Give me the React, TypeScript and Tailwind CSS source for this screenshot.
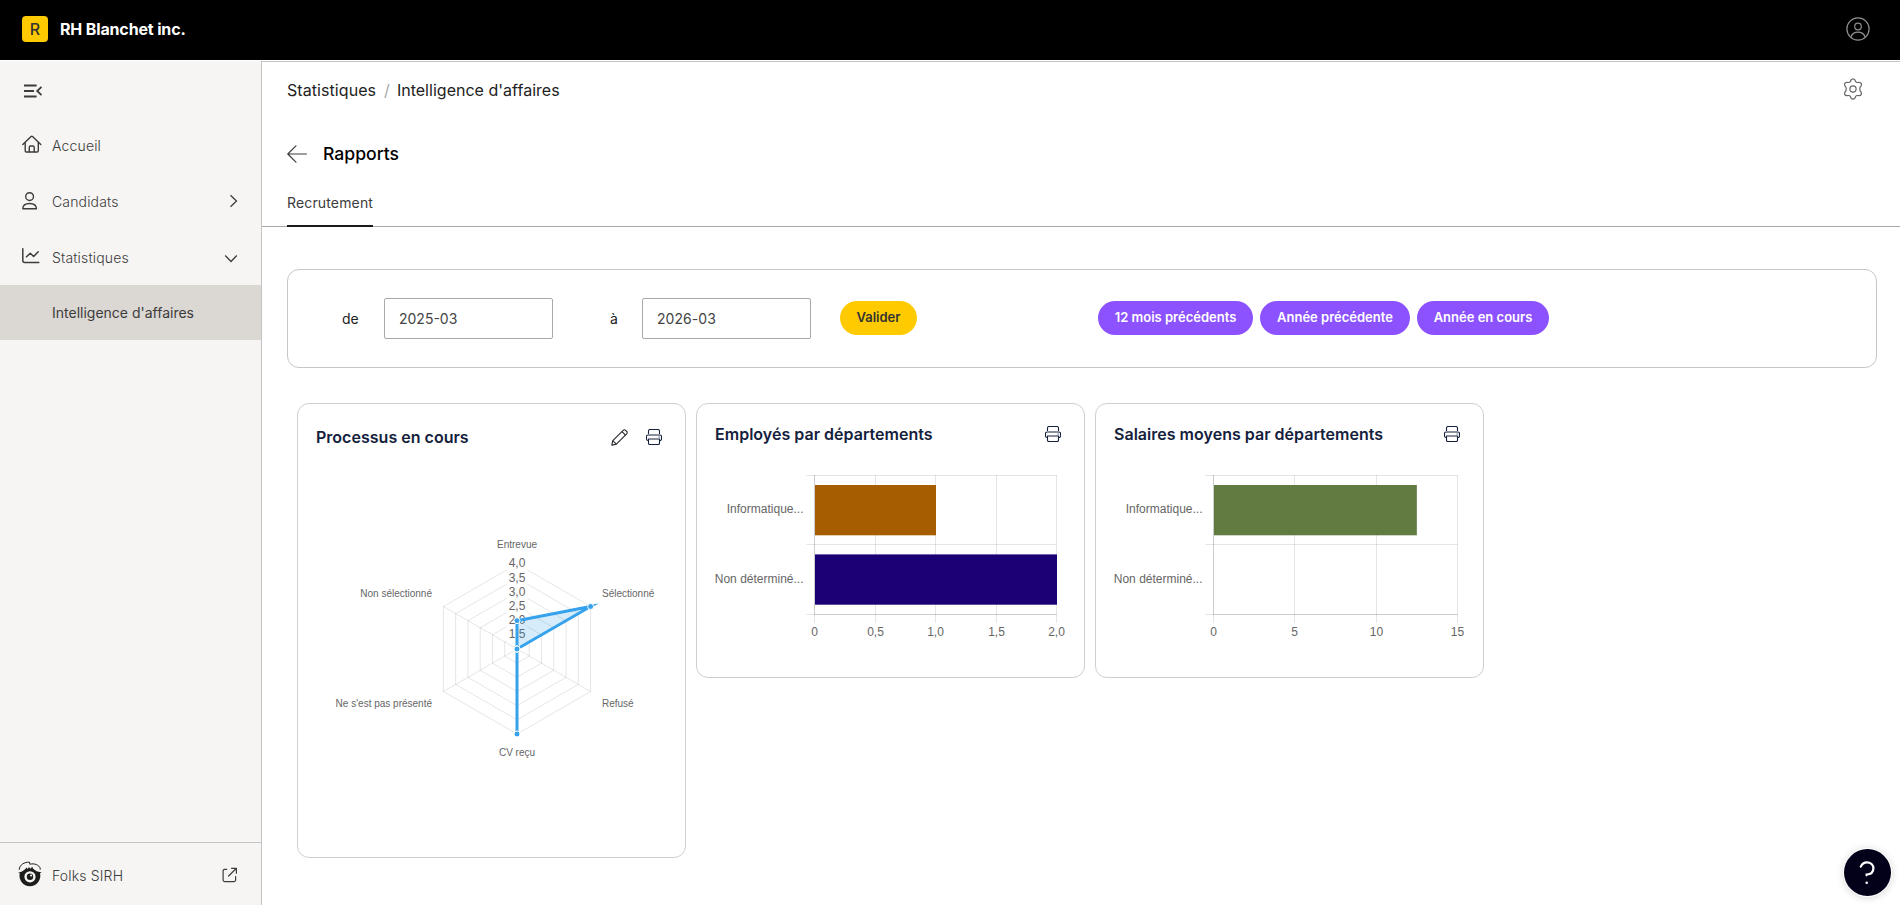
import React from 'react';

interface IconProps {
  className?: string;
}

interface BarItem {
  label: string;
  value: number;
  color: string;
}

interface BarChartProps {
  items: BarItem[];
  ticks: string[];
  tickX: number[];
  max: number;
}

const CollapseIcon = ({ className }: IconProps) => (
  <svg className={className} width="20" height="14" viewBox="0 0 20 14" fill="none" stroke="#3c3c3c" strokeWidth="1.8">
    <path d="M1 1.5h12.6M1 7h10M1 12.5h12.6" />
    <path d="M18.5 2.8L14.2 7l4.3 4.2" />
  </svg>
);

const HomeIcon = ({ className }: IconProps) => (
  <svg className={className} width="20" height="18" viewBox="0 0 20 18" fill="none" stroke="#3c3c3c" strokeWidth="1.4" strokeLinecap="round" strokeLinejoin="round">
    <path d="M.8 9.6l8.3-8a1 1 0 0 1 1.4 0l8.3 8" />
    <path d="M3.2 7.8v8a1.2 1.2 0 0 0 1.2 1.2h10.7a1.2 1.2 0 0 0 1.2-1.2V7.8" />
    <path d="M7.3 16.8v-4.6a1.2 1.2 0 0 1 1.2-1.2h2.5a1.2 1.2 0 0 1 1.2 1.2v4.6" />
  </svg>
);

const PersonIcon = ({ className }: IconProps) => (
  <svg className={className} width="16" height="18" viewBox="0 0 16 18" fill="none" stroke="#3c3c3c" strokeWidth="1.4" strokeLinejoin="round">
    <circle cx="7.6" cy="4.6" r="3.9" />
    <path d="M.8 16.8c0-3.5 2.8-5.3 6.8-5.3s6.8 1.8 6.8 5.3z" />
  </svg>
);

const ChartIcon = ({ className }: IconProps) => (
  <svg className={className} width="18" height="16" viewBox="0 0 18 16" fill="none" stroke="#3c3c3c" strokeWidth="1.5" strokeLinecap="round" strokeLinejoin="round">
    <path d="M.8.8v12a1.7 1.7 0 0 0 1.7 1.7h14.3" />
    <path d="M4.5 8.7l3.8-3.5 3.3 3.3 4.6-4.7" />
  </svg>
);

const ArrowLeftIcon = () => (
  <svg width="20" height="18" viewBox="0 0 20 18" fill="none" stroke="#3c3c3c" strokeWidth="1.2" strokeLinecap="round" strokeLinejoin="round">
    <path d="M19.4 9H.8M8.9.8L.8 9l8.1 8.2" />
  </svg>
);

const ExternalIcon = () => (
  <svg width="16" height="16" viewBox="0 0 16 16" fill="none" stroke="#3c3c3c" strokeWidth="1.2" strokeLinecap="round" strokeLinejoin="round">
    <path d="M9.5 1.3h4.9v4.9M14.2 1.5L6.6 9" />
    <path d="M4.7 2.3H2.6A1.5 1.5 0 0 0 1.1 3.8v9.3a1.5 1.5 0 0 0 1.5 1.5h9.5a1.5 1.5 0 0 0 1.5-1.5V9.5" />
  </svg>
);

const FolksLogo = () => (
  <svg width="24" height="27" viewBox="0 0 24 27" fill="none">
    <path d="M.2 11.7L4 10.5l3.4-2.6 1.1-1.5 1.1 1.5L11 5.9l1.3 1.9 2-2.1.8 2 3.5 2.6 5.2 1.3-1.8.7a10.4 10.4 0 1 1-20.2 0z" fill="#1d1d1b" />
    <circle cx="12" cy="15.8" r="5.6" fill="#f6f5f3" />
    <circle cx="12" cy="15.8" r="3.2" fill="#1d1d1b" />
    <circle cx="13.1" cy="14.5" r="1.1" fill="#f6f5f3" />
    <path d="M1.2 8.8C1.3 4 6.5.8 11.5 1.2l.3 1.8M11.7 3.3c4.8-1.5 9.5 1 10.5 3.9v1.5" stroke="#1d1d1b" strokeWidth="1" />
  </svg>
);

const PencilIcon = () => (
  <svg width="17" height="17" viewBox="0 0 17 17" fill="none" stroke="#26282c" strokeWidth="1.1" strokeLinejoin="round">
    <path d="M.8 16.2l1-4.6L12.2 1.3a1.6 1.6 0 0 1 2.3 0l1.2 1.2a1.6 1.6 0 0 1 0 2.3L5.4 15.1z" />
    <path d="M11 2.6l3.5 3.5M1.8 11.6l3.6 3.5" />
  </svg>
);

const PrinterIcon = () => (
  <svg width="16" height="16" viewBox="0 0 16 16" fill="none" stroke="#14213d" strokeWidth="1.1" strokeLinecap="round" strokeLinejoin="round">
    <path d="M2.5 4.5V2A1.5 1.5 0 0 1 4 .5h8A1.5 1.5 0 0 1 13.500 2v2.500" />
    <path d="M2.500 11.500H2A1.500 1.500 0 0 1 .5 10V7.500A1.500 1.500 0 0 1 2 6h12a1.500 1.500 0 0 1 1.500 1.500V10a1.500 1.500 0 0 1-1.500 1.500h-.5" />
    <path d="M2.500 10h11v4.200a1.300 1.300 0 0 1-1.300 1.300H3.800a1.300 1.300 0 0 1-1.300-1.300zM13 8h.3" />
  </svg>
);

const GearIcon = () => (
  <svg width="22" height="22" viewBox="0 0 22 22" fill="none" stroke="#666" strokeWidth="1.2" strokeLinejoin="round">
    <circle cx="11" cy="11" r="3.1" />
    <path d="M8.900 2.200Q11-.5 13.100 2.200l.6 1.500q.6.9 1.700.8l1.600-.2q3.400.4 2.100 3.600l-1 1.300q-.6 1.800 0 3.600l1 1.300q1.300 3.200-2.100 3.600l-1.600-.2q-1.100-.1-1.700.8l-.6 1.500Q11 22.500 8.900 19.800l-.6-1.500q-.6-.9-1.700-.8l-1.600.2q-3.400-.4-2.100-3.600l1-1.300q.6-1.800 0-3.600L2.900 7.900Q1.600 4.700 5 4.300l1.600.2q1.100.1 1.700-.8z" />
  </svg>
);

const UserCircleIcon = () => (
  <svg width="24" height="24" viewBox="0 0 24 24" fill="none" stroke="#8f8f8f" strokeWidth="1.2">
    <circle cx="12" cy="12" r="11.1" />
    <circle cx="12" cy="9.5" r="3.3" />
    <path d="M4.700 20.200c1.200-3.300 3.900-5.100 7.300-5.100s6.100 1.800 7.300 5.100" />
  </svg>
);

const BarChart: React.FC<BarChartProps> = ({ items, ticks, tickX, max }) => {
  const left = tickX[0];
  const right = tickX[tickX.length - 1];
  return (
    <svg className="block" width="387" height="200" fontFamily='"Liberation Sans", Arial, sans-serif' fontSize="12">
      {/* grid */}
      {[21.5, 90.5, 160.5].map(y => (
        <line key={y} x1={left - 8} x2={right} y1={y} y2={y} stroke="#000" strokeOpacity="0.1" />
      ))}
      {tickX.map(x => (
        <line key={x} x1={x} x2={x} y1="21" y2="169" stroke="#000" strokeOpacity="0.1" />
      ))}
      <path d={`M${left} 21V160.5H${right}`} fill="none" stroke="#000" strokeOpacity="0.1" />
      {items.map((item, i) => {
        const width = ((right - left) * item.value) / max;
        const y = 31 + i * 69.4;
        return (
          <g key={item.label}>
            {width > 0 && (
              <rect x={left + 0.5} y={y} width={width} height="50.3" fill={item.color} />
            )}
            <text x={left - 11} y={59 + i * 70} textAnchor="end" fill="#666">{item.label}</text>
          </g>
        );
      })}
      {ticks.map((t, i) => (
        <text key={t} x={tickX[i]} y="182" textAnchor="middle" fill="#666">{t}</text>
      ))}
    </svg>
  );
};

const CX = 219;
const CY = 186;
const RADIUS = 85;
const MIN = 1;
const MAX = 4;

const radarPoint = (index: number, value: number) => {
  const r = ((value - MIN) / (MAX - MIN)) * RADIUS;
  const angle = (Math.PI / 3) * index - Math.PI / 2;
  return [CX + r * Math.cos(angle), CY + r * Math.sin(angle)];
};

const toPoints = (values: number[]) => values.map((v, i) => radarPoint(i, v).join(',')).join(' ');

const RadarChart = () => {
  const levels = [1.5, 2, 2.5, 3, 3.5, 4];
  const values = [2, 4, 1, 4, 1, 1];
  return (
    <svg className="block" width="387" height="380" fontFamily='"Liberation Sans", Arial, sans-serif'>
      {levels.map(l => (
        <polygon key={l} points={toPoints([l, l, l, l, l, l])} fill="none" stroke="#000" strokeOpacity="0.1" />
      ))}
      {values.map((_, i) => {
        const [x, y] = radarPoint(i, MAX);
        return <line key={i} x1={CX} y1={CY} x2={x} y2={y} stroke="#000" strokeOpacity="0.1" />;
      })}
      {levels.map(l => {
        const y = radarPoint(0, l)[1];
        return (
          <g key={l}>
            <rect x={CX - 10.5} y={y - 8} width="21" height="16" fill="#fff" fillOpacity="0.75" />
            <text x={CX} y={Math.round(y + 3.4)} fontSize="12" textAnchor="middle" fill="#666">{l.toFixed(1).replace('.', ',')}</text>
          </g>
        );
      })}
      <g fontSize="10" fill="#666">
        <text x={CX} y="85" textAnchor="middle">Entrevue</text>
        <text x="304" y="134">Sélectionné</text>
        <text x="304" y="244">Refusé</text>
        <text x={CX} y="293" textAnchor="middle">CV reçu</text>
        <text x="134" y="244" textAnchor="end">Ne s'est pas présenté</text>
        <text x="134" y="134" textAnchor="end">Non sélectionné</text>
      </g>
      <polygon points={toPoints(values)} fill="#36a2eb" fillOpacity="0.2" stroke="#36a2eb" strokeWidth="3" strokeMiterlimit="10" />
      {values.map((v, i) => {
        const [x, y] = radarPoint(i, v);
        return <circle key={i} cx={x} cy={y} r="3" fill="#36a2eb" stroke="#fff" />;
      })}
    </svg>
  );
};

const PeriodButton = ({ label, className }: { label: string; className: string }) => (
  <button className={`h-[34px] rounded-full bg-[#8c52ff] pt-px text-[13px] font-semibold text-white ${className}`}>{label}</button>
);

const cardClass = 'w-[389px] rounded-xl border border-[#d0cece] bg-white';
const titleClass = 'text-[16px] font-semibold tracking-[0.02px] text-[#14213d]';

const App: React.FC = () => (
  <div className="h-[905px] w-[1900px] overflow-hidden bg-white font-[Inter,sans-serif] text-[#222]">
    <header className="flex h-[60px] items-center bg-black pl-[22px] pr-[30px]">
      <div className="-mt-[2px] flex size-[26px] items-center justify-center rounded-[4px] bg-[#ffcb00] text-[16px] font-medium text-[#333]">R</div>
      <div className="-mt-[2px] ml-3 text-[16px] font-bold tracking-[-0.15px] text-white">RH Blanchet inc.</div>
      <div className="-mt-[3px] ml-auto">
        <UserCircleIcon />
      </div>
    </header>

    <div className="mt-px flex h-[844px]">
      <aside className="flex w-[262px] flex-col border-r border-[#c4c4c4] bg-[#f6f5f3] text-[14px] font-light tracking-[0.16px] text-[#3c3c3c]">
        <div className="flex h-[56px] items-center pl-[23px]">
          <CollapseIcon className="mt-[4px]" />
        </div>
        <div className="flex h-14 items-center pl-[22px]">
          <HomeIcon className="-mt-[2px]" />
          <span className="ml-[10px]">Accueil</span>
        </div>
        <div className="flex h-14 items-center pl-[22px] pr-[23px]">
          <PersonIcon />
          <span className="ml-[14px]">Candidats</span>
          <svg className="ml-auto" width="9" height="14" viewBox="0 0 9 14" fill="none" stroke="#3c3c3c" strokeWidth="1.3">
            <path d="M1.5 1.2l6 5.800-6 5.800" />
          </svg>
        </div>
        <div className="flex h-14 items-center pl-[22px] pr-[23px]">
          <ChartIcon className="-mt-[2px]" />
          <span className="ml-3">Statistiques</span>
          <svg className="ml-auto mt-[3px]" width="14" height="9" viewBox="0 0 14 9" fill="none" stroke="#3c3c3c" strokeWidth="1.3">
            <path d="M1.2 1.5l5.800 6 5.800-6" />
          </svg>
        </div>
        <div className="flex h-[55px] items-center bg-[#dbd7d3] pl-[52px] font-normal tracking-normal">Intelligence d'affaires</div>
        <div className="mt-auto flex h-[63px] items-center border-t border-[#c4c4c4] pl-[18px] pr-[23px]">
          <FolksLogo />
          <span className="ml-[10px] mt-[3px]">Folks SIRH</span>
          <div className="ml-auto mt-px">
            <ExternalIcon />
          </div>
        </div>
      </aside>

      <main className="min-w-0 flex-1 border-t border-[#c4c4c4]">
        <div className="flex h-[55px] items-center pl-[25px] pr-[36px] text-[16px]">
          <span className="tracking-[0.07px]">Statistiques</span>
          <span className="ml-2 mr-[7px] text-[#aaa]">/</span>
          <span className="tracking-[0.02px]">Intelligence d'affaires</span>
          <div className="-mt-px ml-auto">
            <GearIcon />
          </div>
        </div>
        <div className="flex h-[74px] items-center pl-[25px]">
          <ArrowLeftIcon />
          <h1 className="ml-4 text-[17.6px] font-medium text-black">Rapports</h1>
        </div>
        <div className="flex h-[36px] border-b border-[#a9a9a9] pl-[25px]">
          <div className="-mb-px w-[86px] border-b-2 border-[#1a1a1a] pt-px text-[14px] tracking-[0.15px] text-[#3c3c3c]">Recrutement</div>
        </div>

        <section className="ml-[25px] mt-[42px] flex h-[99px] w-[1590px] items-center rounded-xl border border-[#c9c5c5] text-[14px]">
          <label className="ml-[54px] w-[42px]">de</label>
          <input className="h-[41px] w-[169px] rounded-[2px] border border-[#a9a9a9] px-[14px] text-[#444]" defaultValue="2025-03" />
          <label className="ml-[57px] w-[32px]">à</label>
          <input className="h-[41px] w-[169px] rounded-[2px] border border-[#a9a9a9] px-[14px] tracking-[0.05px] text-[#444]" defaultValue="2026-03" />
          <button className="-mt-[2px] ml-[29px] h-[34px] w-[77px] rounded-full bg-[#ffcb00] pt-px text-[13px] font-semibold text-[#333]">Valider</button>
          <div className="-mt-[2px] ml-[181px] flex gap-[7px]">
            <PeriodButton label="12 mois précédents" className="w-[155px]" />
            <PeriodButton label="Année précédente" className="w-[150px]" />
            <PeriodButton label="Année en cours" className="w-[132px]" />
          </div>
        </section>

        <section className="ml-[35px] mt-[35px] flex items-start gap-[10px]">
          <article className={`h-[455px] ${cardClass}`}>
            <div className="flex h-[59px] items-center gap-[18px] pl-[18px] pr-[23px] pt-[7px]">
              <h2 className={`mr-auto ${titleClass}`}>Processus en cours</h2>
              <PencilIcon />
              <PrinterIcon />
            </div>
            <RadarChart />
          </article>
          <article className={`h-[275px] ${cardClass}`}>
            <div className="flex h-[50px] items-center pl-[18px] pr-[23px] pt-[10px]">
              <h2 className={`mr-auto ${titleClass}`}>Employés par départements</h2>
              <PrinterIcon />
            </div>
            <BarChart
              items={[
                { label: 'Informatique...', value: 1, color: '#a55d00' },
                { label: 'Non déterminé...', value: 2, color: '#1b0075' },
              ]}
              ticks={['0', '0,5', '1,0', '1,5', '2,0']}
              tickX={[117.5, 178.5, 238.5, 299.5, 359.5]}
              max={2}
            />
          </article>
          <article className={`h-[275px] ${cardClass}`}>
            <div className="flex h-[50px] items-center pl-[18px] pr-[23px] pt-[10px]">
              <h2 className={`mr-auto ${titleClass}`}>Salaires moyens par départements</h2>
              <PrinterIcon />
            </div>
            <BarChart
              items={[
                { label: 'Informatique...', value: 12.47, color: '#627b40' },
                { label: 'Non déterminé...', value: 0, color: '#627b40' },
              ]}
              ticks={['0', '5', '10', '15']}
              tickX={[117.5, 198.5, 280.5, 361.5]}
              max={15}
            />
          </article>
        </section>
      </main>
    </div>

    {/* floating help button */}
    <button className="fixed bottom-[9px] right-[9px] flex size-[47px] items-center justify-center rounded-full bg-[#03001a] shadow-[0_0_0_1px_#fff,0_1px_8px_rgba(0,0,0,0.2)]">
      <svg className="-ml-[2px]" width="18" height="26" viewBox="0 0 18 26" fill="none" stroke="#fff" strokeWidth="2.2" strokeLinecap="round">
        <path d="M2.800 6.700C4 3.800 6.300 2.300 9 2.300c3.600 0 6.400 2.600 6.400 5.900 0 3.800-2.600 6-6.800 6.300v.8" />
        <circle cx="8.7" cy="22.7" r=".6" fill="#fff" strokeWidth="1.4" />
      </svg>
    </button>
  </div>
);

export default App;
